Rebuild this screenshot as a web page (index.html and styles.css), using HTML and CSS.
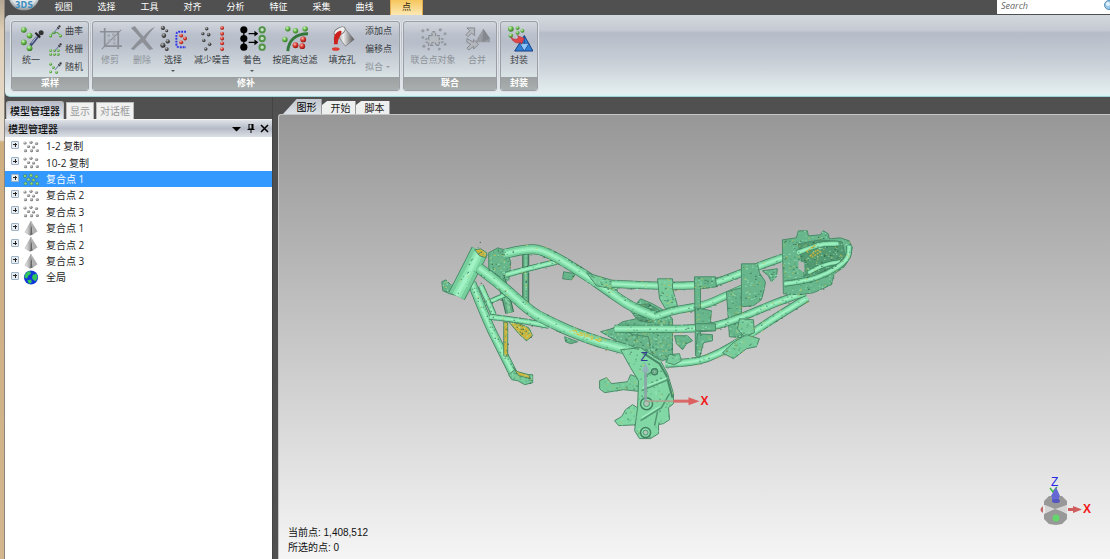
FILE: index.html
```html
<!DOCTYPE html>
<html lang="zh-CN">
<head>
<meta charset="utf-8">
<title>模型管理器</title>
<link rel="stylesheet" href="styles.css">
</head>
<body>
<svg class="defs" aria-hidden="true">
  <defs>
    <radialGradient id="gGreen" cx=".38" cy=".32" r=".7"><stop offset="0" stop-color="#d4f5c4"/><stop offset=".5" stop-color="#68b84e"/><stop offset="1" stop-color="#32781f"/></radialGradient>
    <radialGradient id="gRed" cx=".38" cy=".32" r=".7"><stop offset="0" stop-color="#f9b9b0"/><stop offset=".5" stop-color="#d8382e"/><stop offset="1" stop-color="#8e150e"/></radialGradient>
    <radialGradient id="gDark" cx=".38" cy=".32" r=".7"><stop offset="0" stop-color="#c4c4c4"/><stop offset=".5" stop-color="#555"/><stop offset="1" stop-color="#222"/></radialGradient>
    <radialGradient id="gGray" cx=".38" cy=".32" r=".7"><stop offset="0" stop-color="#e4e4e4"/><stop offset=".5" stop-color="#999"/><stop offset="1" stop-color="#666"/></radialGradient>
    <linearGradient id="gCan" x1="0" x2="1"><stop offset="0" stop-color="#777"/><stop offset=".4" stop-color="#eee"/><stop offset="1" stop-color="#555"/></linearGradient>
    <linearGradient id="gPyr" x1="0" x2="1"><stop offset="0" stop-color="#eee"/><stop offset="1" stop-color="#999"/></linearGradient>
    <symbol id="picker" viewBox="0 0 12 12"><path d="M2 11 8 4" stroke="#7182a5" stroke-width="1.4"/><path d="M7 3l2.5 2.5" stroke="#333" stroke-width="1.6"/><circle cx="10" cy="2" r="1.6" fill="#333"/></symbol>
    <symbol id="cloud" viewBox="0 0 16 12"><g fill="url(#gGray)"><circle cx="2" cy="2.500" r="1.600"/><circle cx="8" cy="1.800" r="1.600"/><circle cx="13.500" cy="3" r="1.600"/><circle cx="5.500" cy="6" r="1.600"/><circle cx="10.500" cy="6.500" r="1.600"/><circle cx="2.500" cy="10.200" r="1.600"/><circle cx="8.500" cy="10.200" r="1.600"/><circle cx="14.300" cy="10" r="1.600"/></g></symbol>
    <symbol id="pyramid" viewBox="0 0 16 16"><path d="M8 0 1.500 12 7 15.500z" fill="url(#gPyr)" stroke="#999" stroke-width=".4"/><path d="M8 0 7 15.500 10 14.500z" fill="#666"/><path d="M8 0 10 14.500 15 11z" fill="#b0b0b0"/></symbol>
  </defs>
</svg>
<div class="desktop-edge"></div>
<div class="app">
  <header class="menubar">
    <div class="logo"><svg viewBox="0 0 32 32" width="32" height="32"><defs><radialGradient id="orb" cx=".5" cy=".35" r=".65"><stop offset="0" stop-color="#fff"/><stop offset=".75" stop-color="#dde3e6"/><stop offset="1" stop-color="#858c90"/></radialGradient></defs><circle cx="16" cy="16" r="15.500" fill="url(#orb)"/><text x="16" y="29" text-anchor="middle" class="logo-text">3DS</text></svg></div>
    <nav class="menu">
      <button>视图</button><button>选择</button><button>工具</button><button>对齐</button><button>分析</button><button>特征</button><button>采集</button><button>曲线</button><button class="active">点</button>
    </nav>
    <label class="search"><input type="text" placeholder="Search" aria-label="Search"><svg viewBox="0 0 12 12" width="12" height="12"><path d="M8 8l3 3" stroke="#666" stroke-width="2"/><circle cx="6" cy="5" r="4.500" fill="#9ac8e8" stroke="#5b8fb8"/><circle cx="5" cy="4" r="2" fill="#e4f4fc"/></svg></label>
  </header>

  <section class="ribbon">
    <div class="group">
      <div class="tools">
        <button class="tool w36"><svg viewBox="0 0 26 28"><g fill="url(#gGreen)"><circle cx="5" cy="5" r="3"/><circle cx="11" cy="11" r="3"/><circle cx="5" cy="18" r="3"/><circle cx="11" cy="24" r="3"/></g><path d="M12 21 21 10" stroke="#3d4a75" stroke-width="3"/><path d="M13 19 20 10" stroke="#c4cde4" stroke-width="1"/><path d="M17 8l5 5" stroke="#222" stroke-width="2"/><circle cx="23" cy="8" r="2.600" fill="#333"/></svg><span>统一</span></button>
        <div class="stack samples">
          <button><svg viewBox="0 0 12 12"><path d="M1 10 4 7 8 7 11 10" stroke="#68aa56" fill="none"/><g fill="url(#gGreen)"><circle cx="1.500" cy="10" r="1.500"/><circle cx="4.500" cy="7" r="1.500"/><circle cx="10.500" cy="10" r="1.500"/></g><use href="#picker" x="3" y="0" width="8" height="8"/></svg>曲率</button>
          <button><svg viewBox="0 0 12 12"><g fill="url(#gGreen)"><circle cx="1.500" cy="7" r="1.300"/><circle cx="5" cy="7" r="1.300"/><circle cx="8.500" cy="7" r="1.300"/><circle cx="1.500" cy="10.500" r="1.300"/><circle cx="5" cy="10.500" r="1.300"/><circle cx="8.500" cy="10.500" r="1.300"/></g><use href="#picker" x="4" y="0" width="8" height="8"/></svg>格栅</button>
          <button><svg viewBox="0 0 12 12"><g fill="url(#gGreen)"><circle cx="1.500" cy="3" r="1.300"/><circle cx="4" cy="6" r="1.300"/><circle cx="1.500" cy="10" r="1.300"/><circle cx="7" cy="10.500" r="1.300"/></g><use href="#picker" x="4" y="1" width="8" height="8"/></svg>随机</button>
        </div>
      </div>
      <h2>采样</h2>
    </div>

    <div class="group">
      <div class="tools">
        <button class="tool w32" disabled><svg viewBox="0 0 26 28"><g fill="none" stroke="#8b8f96" stroke-width="1.800"><path d="M7 3v19h18M2 7h19v18"/><path d="M4 25 24 5" stroke-width="1.200"/></g><g fill="#a4a8ae"><circle cx="11" cy="11" r="1.500"/><circle cx="16" cy="10" r="1.500"/><circle cx="12" cy="16" r="1.500"/><circle cx="17" cy="15" r="1.500"/><circle cx="17" cy="19" r="1.500"/></g></svg><span>修剪</span></button>
        <button class="tool w32" disabled><svg viewBox="0 0 26 28"><path d="M1 3 5 1C9 6 12 10 14 12 18 7 22 3 26 2 21 7 18 11 16 15L24 25 20 26 13 18C9 21 7 23 4 26L1 25C4 21 8 17 11 14 7 9 4 6 1 3z" fill="#8d9197"/></svg><span>删除</span></button>
        <button class="tool w30"><svg viewBox="0 0 28 28"><g fill="url(#gDark)"><circle cx="3" cy="3" r="2.200"/><circle cx="7" cy="6" r="1.600"/><circle cx="4" cy="11" r="2.400"/><circle cx="8" cy="17" r="2.200"/><circle cx="3" cy="21" r="2.600"/><circle cx="7" cy="25" r="2"/></g><path d="M27 7h-7q-3 0-3 3v10q0 3 3 3h7" fill="none" stroke="#3034e8" stroke-width="2" stroke-dasharray="2 1"/><g fill="url(#gRed)"><circle cx="22" cy="11" r="2"/><circle cx="26" cy="14" r="2"/><circle cx="22" cy="18" r="2"/></g></svg><span>选择</span><i class="caret"></i></button>
        <button class="tool w48"><svg viewBox="0 0 26 28"><g fill="url(#gDark)"><circle cx="7" cy="4" r="1.800"/><circle cx="3" cy="9" r="1.700"/><circle cx="9" cy="10" r="1.900"/><circle cx="4" cy="16" r="1.700"/><circle cx="10" cy="20" r="1.800"/><circle cx="6" cy="25" r="1.800"/></g><g fill="url(#gRed)"><circle cx="23" cy="3" r="2"/><circle cx="23" cy="9" r="2"/><circle cx="23" cy="14" r="2"/><circle cx="23" cy="19" r="2"/><circle cx="23" cy="25" r="2"/></g></svg><span>减少噪音</span></button>
        <button class="tool w32"><svg viewBox="0 0 28 28"><circle cx="5" cy="5" r="3.700"/><circle cx="5" cy="14" r="3.700"/><circle cx="5" cy="23" r="3.700"/><path d="M5 5v18M10 9h8M10 18h8" stroke="#000" stroke-width="1.400"/><path d="M16 6l4 3-4 3zM16 15l4 3-4 3z"/><g fill="#c4dec0" stroke="#4f9147" stroke-width="2"><circle cx="24" cy="5" r="2.800"/><circle cx="24" cy="14" r="2.800"/><circle cx="24" cy="23" r="2.800"/></g></svg><span>着色</span><i class="caret"></i></button>
        <button class="tool w54"><svg viewBox="0 0 28 28"><path d="M6 27C7 16 14 9 27 9" fill="none" stroke="#34773a" stroke-width="3"/><g fill="url(#gGreen)"><circle cx="6" cy="4" r="2.800"/><circle cx="14" cy="6" r="2.800"/><circle cx="24" cy="4" r="2.800"/><circle cx="3" cy="15" r="2.800"/></g><g fill="url(#gRed)"><circle cx="22" cy="15" r="3"/><circle cx="14" cy="21" r="3"/><circle cx="21" cy="22" r="3"/></g></svg><span>按距离过滤</span></button>
        <button class="tool w40"><svg viewBox="0 0 26 28"><path d="M6 8 15 3 25 15 16 22z" fill="url(#gCan)" stroke="#666" stroke-width=".6"/><ellipse cx="10" cy="6.500" rx="6.500" ry="3.500" transform="rotate(-32 10 6.500)" fill="#eee" stroke="#777"/><path d="M5 10C8 6 12 5 12 7 12 11 8 13 8 20H4C5 17 3 15 5 10z" fill="#cc211c"/><ellipse cx="6" cy="25" rx="4" ry="1.800" fill="#df3a30"/></svg><span>填充孔</span></button>
        <div class="stack">
          <button>添加点</button><button>偏移点</button><button disabled>拟合<i class="caret"></i></button>
        </div>
      </div>
      <h2>修补</h2>
    </div>

    <div class="group">
      <div class="tools union">
        <button class="tool w54" disabled><svg viewBox="0 0 28 28"><path d="M9 11h4q-2-4 1-4t2 4h4v4q4-2 4 1t-4 2v3h-4q1-3-2-3t-1 3H9v-3q-3 1-3-2t3-1z" fill="#b7bbc2" stroke="#8a8e95" stroke-width="1.300" stroke-dasharray="3 1"/><g fill="#989ca2"><circle cx="3" cy="6" r="1.700"/><circle cx="8" cy="5" r="1.500"/><circle cx="21" cy="5" r="1.700"/><circle cx="26" cy="9" r="1.600"/><circle cx="3" cy="13" r="1.500"/><circle cx="26" cy="20" r="1.600"/><circle cx="4" cy="22" r="1.700"/><circle cx="9" cy="25" r="1.500"/><circle cx="20" cy="25" r="1.500"/></g></svg><span>联合点对象</span></button>
        <button class="tool w34" disabled><svg viewBox="0 0 28 28"><path d="M12 17 20 4 27 14 27 18H12z" fill="#979ba1"/><path d="M20 4 19 18 27 14z" fill="#85898f"/><path d="M3 3h8v8L8 8.500 4 12 2 10 6 6zM3 14l7 4v-3l5 5-5 5v-3l-5 4-2-2 4-4-4-2z" fill="#b4b8be" stroke="#85898f"/></svg><span>合并</span></button>
      </div>
      <h2>联合</h2>
    </div>

    <div class="group">
      <div class="tools">
        <button class="tool w34"><svg viewBox="0 0 28 28"><g fill="url(#gGreen)"><circle cx="5" cy="4" r="3"/><circle cx="12" cy="3" r="2"/><circle cx="5" cy="11" r="2.300"/><circle cx="12" cy="8" r="2"/><circle cx="17" cy="6" r="2"/></g><path d="M19 11 9 27h19z" fill="#2f7fd6" stroke="#173f83"/><path d="M14 19h10L19 27zM19 11v8" fill="#8dc5f7" stroke="#173f83" stroke-width=".7"/><path d="M5 12c2 3 6 4 8 1l-1-2 7 3-3 6-1-2C11 20 6 17 5 12z" fill="#e24448" stroke="#a2242b" stroke-width=".5"/></svg><span>封装</span></button>
      </div>
      <h2>封装</h2>
    </div>
  </section>

  <main class="workspace">
    <aside class="manager">
      <div class="side-tabs"><button class="active">模型管理器</button><button>显示</button><button>对话框</button></div>
      <div class="panel-title"><h1>模型管理器</h1>
        <button aria-label="菜单"><svg viewBox="0 0 9 9"><path d="M0 3h9L4.500 7.500z"/></svg></button>
        <button aria-label="固定"><svg viewBox="0 0 9 9"><path d="M3 0h4v5H3zM1.500 5.500h7M5 5v4" fill="none" stroke="#000"/><path d="M5.500 0H7v5H5.500z"/></svg></button>
        <button aria-label="关闭"><svg viewBox="0 0 9 9"><path d="M1 1l7 7M8 1 1 8" stroke="#000" stroke-width="1.500"/></svg></button>
      </div>
      <ul class="tree">
        <li><button aria-label="展开"></button><svg><use href="#cloud"/></svg>1-2 复制</li>
        <li><button aria-label="展开"></button><svg><use href="#cloud"/></svg>10-2 复制</li>
        <li class="selected"><button aria-label="展开"></button><svg viewBox="0 0 16 12"><g fill="#8fd878" stroke="#2f6e5c" stroke-width=".5"><circle cx="2" cy="2.500" r="1.600"/><circle cx="8" cy="1.900" r="1.600"/><circle cx="13.500" cy="3" r="1.600"/><circle cx="5.500" cy="6" r="1.600"/><circle cx="10.500" cy="6.500" r="1.600"/><circle cx="2.500" cy="10" r="1.600"/><circle cx="8.500" cy="10" r="1.600"/><circle cx="14.200" cy="10" r="1.600"/></g></svg>复合点 1</li>
        <li><button aria-label="展开"></button><svg><use href="#cloud"/></svg>复合点 2</li>
        <li><button aria-label="展开"></button><svg><use href="#cloud"/></svg>复合点 3</li>
        <li><button aria-label="展开"></button><svg><use href="#pyramid"/></svg>复合点 1</li>
        <li><button aria-label="展开"></button><svg><use href="#pyramid"/></svg>复合点 2</li>
        <li><button aria-label="展开"></button><svg><use href="#pyramid"/></svg>复合点 3</li>
        <li><button aria-label="展开"></button><svg viewBox="0 0 16 16"><circle cx="8" cy="8" r="7.500" fill="#1238d8"/><path d="M2 4q2-3 5-3l1 3-3 2-1 3-3-1zM10 5l4-1 1 4-2 4-3-2-1-2zM4 11l4-1 1 3-3 2z" fill="#2fc65a"/></svg>全局</li>
      </ul>
    </aside>
    <section class="view">
      <div class="view-tabs"><button class="active">图形</button><button>开始</button><button>脚本</button></div>
      <div class="canvas">
        <svg class="scene" viewBox="278 114 832 445" preserveAspectRatio="xMinYMin meet" role="img" aria-label="车架点云">
          <g id="model"></g>
          <g class="axes">
            <path d="M645 401V366" stroke="#8ba3a8" stroke-width="3" opacity=".85"/>
            <path d="M645 362l4 9h-8z" fill="#93b4bb"/>
            <path d="M645 400.500h29" stroke="#b5a090" stroke-width="1.500"/>
            <path d="M673 400.500h18" stroke="#d96a6a" stroke-width="3"/>
            <path d="M688 396.500l11 4-11 4z" fill="#dc6060"/>
            <text x="640" y="360" class="axis-z model-z">Z</text>
            <text x="700" y="404" class="axis-x">X</text>
          </g>
        </svg>
        <svg class="triad" viewBox="1035 472 60 60" width="60" height="60">
          <path d="M1044 501l5-5h13l5 5v4l-9 4 9 5v5l-5 5-6 1-7-1-5-5v-5l10-5-10-4z" fill="#989898"/>
          <path d="M1055 509l12-4v8zM1055 509l-10-4v8z" fill="#d6d6d6"/>
          <path d="M1043 506v7q-5-3 0-7z" fill="#c46464"/>
          <path d="M1068 508h5v-2l9 3.500-9 3.500v-2h-5z" fill="#cf5d5d"/>
          <path d="M1050 488l3 4 4-5" fill="none" stroke="#3dbb44" stroke-width="1.500"/>
          <path d="M1056 487l4 9-1 1v5h-7v-5l-1-1z" fill="#6668d4"/><ellipse cx="1056" cy="501" rx="4" ry="2" fill="#5657bd"/>
          <circle cx="1056" cy="518" r="3.500" fill="#63d66b"/>
          <text x="1051" y="486" class="axis-z">Z</text><text x="1083" y="513" class="axis-x">X</text>
        </svg>
        <div class="status"><p>当前点: 1,408,512</p><p>所选的点: 0</p></div>
      </div>
    </section>
  </main>
</div>
<script src="scene.js"></script>
</body>
</html>
```
FILE: styles.css
```css
* { box-sizing: border-box; }
body { margin: 0; height: 100vh; display: flex; overflow: hidden; background: #505050; color: #222; font: 10px/14px "Open Sans", "Noto Sans CJK SC", sans-serif; }
button { font: inherit; color: inherit; border: 0; padding: 0; margin: 0; background: none; white-space: nowrap; }
h1, h2, p, ul { margin: 0; padding: 0; font: inherit; }
.defs { position: absolute; width: 0; height: 0; }
.desktop-edge { flex: none; width: 5px; border-right: 1px solid #8b8580; background: linear-gradient(#b3a591 0, #ddcdb4 30px, #e8dfd2 140px, #cfae80 142px, #d3b68e 100%); }
.app { flex: 1; min-width: 0; display: flex; flex-direction: column; }

.menubar { flex: none; height: 15px; display: flex; align-items: stretch; color: #fff; font-size: 9px; }
.logo { width: 37px; padding-left: 3px; display: flex; align-items: flex-end; overflow: hidden; }
.logo svg { flex: none; margin-bottom: 4px; }
.logo-text { font: bold 8px "DejaVu Sans", sans-serif; fill: #3e8fc0; }
.menu { display: flex; }
.menu button { width: 43px; line-height: 13px; padding-bottom: 2px; }
.menu .active { width: 33px; margin-left: 4px; color: #332a10; background: linear-gradient(#f5c65c, #fde9b5); border: solid #e0a94c; border-width: 0 1px; }
.search { margin-left: auto; width: 113px; height: 14px; display: flex; align-items: center; background: #fff; padding-left: 4px; overflow: hidden; }
.search input { flex: 1; min-width: 0; border: 0; padding: 0; margin: 0 0 3px; font: italic 9px/12px "Open Sans", sans-serif; background: none; outline: 0; }
.search input::placeholder { color: #666; }
.search svg { flex: none; margin: 0 -5px 2px 0; }

.ribbon { flex: none; height: 82px; display: flex; align-items: flex-start; gap: 3px; padding: 6px; font-size: 9px; border-bottom: 1px solid #9fd0d4; border-radius: 5px 0 0 5px; background: linear-gradient(#d3d7de 0, #c5cad3 15px, #b6bcc8 18px, #c6cdd5 45px, #e4eeef 78px, #d6f3f4 100%); }
.group { display: flex; flex-direction: column; height: 70px; border: 1px solid #9a9fa6; border-radius: 3px; overflow: hidden; background: linear-gradient(#d2d6dd 0, #bcc2cd 12px, #b7bdc9 20px, #dbe4e6 56px); box-shadow: 0 0 0 1px #dfe3e8; }
.group h2 { flex: none; height: 13px; line-height: 12px; text-align: center; color: #fff; font-weight: bold; background: linear-gradient(#9ca0a0, #a9aeae); }
.tools { flex: 1; min-height: 0; display: flex; padding: 0 1px; color: #3a3d42; }
.tools.union { padding: 0 2px; }
.tool { display: flex; flex-direction: column; align-items: center; padding-top: 3px; line-height: 13px; }
.tool svg { width: 27px; height: 27px; margin-bottom: 1px; }
.tool:disabled, .stack button:disabled { color: #8d9299; }
.w30 { width: 30px; } .w32 { width: 32px; } .w34 { width: 34px; } .w36 { width: 36px; } .w40 { width: 40px; } .w48 { width: 48px; } .w54 { width: 54px; }
.stack { display: flex; flex-direction: column; padding: 0 6px 0 3px; }
.stack.samples { padding: 0 4px 0 0; }
.stack button { height: 18px; display: flex; align-items: center; gap: 3px; }
.stack svg { width: 13px; height: 13px; }
.caret { margin-top: 4px; border: solid transparent; border-width: 2px 2px 0; border-top-color: #555; }
.stack .caret { margin: 0; border-top-color: #999; }

.workspace { flex: 1; min-height: 0; display: flex; gap: 5px; }
.manager { width: 268px; display: flex; flex-direction: column; padding-top: 4px; border-right: 1px solid #444; }
.side-tabs { display: flex; align-items: flex-end; gap: 2px; padding-left: 1px; height: 18px; }
.side-tabs button { height: 17px; padding: 0 3px; line-height: 16px; color: #999; background: #f1f1f1; border: 1px solid #bbb; border-bottom: 0; }
.side-tabs .active { height: 18px; color: #111; background: linear-gradient(#b7bcc8, #e5e9ef); border-radius: 3px 3px 0 0; }
.panel-title { display: flex; align-items: center; height: 18px; gap: 5px; padding: 0 3px; color: #111; border-top: 1px solid #f2f2f2; background: linear-gradient(#dfe3e9, #b5bbc7 50%, #dce0e6); }
.side-tabs .active, .panel-title h1 { font-weight: 500; }
.panel-title h1 { flex: 1; }
.panel-title button { width: 9px; height: 9px; display: flex; }
.panel-title svg { width: 9px; height: 9px; }
.tree { flex: 1; list-style: none; display: grid; grid-template-rows: repeat(9, minmax(16px, 3.9%)); padding-top: 1px; background: #fff; }
.tree li { display: flex; align-items: center; padding-left: 6px; }
.tree button { width: 8px; height: 8px; margin: 0 4px 3px 0; border: 1px solid #9db2c4; border-radius: 1px; background: linear-gradient(#222, #222) center / 4px 1px no-repeat, linear-gradient(#222, #222) center / 1px 4px no-repeat, #e6ecf0; }
.tree svg { width: 16px; height: 15px; margin-right: 7px; }
.tree .selected { color: #fff; background: #3399ff; }

.view { flex: 1; min-width: 0; display: flex; flex-direction: column; }
.view-tabs { display: flex; align-items: flex-end; height: 17px; padding: 0 5px; }
.view-tabs button { height: 13px; width: 34px; line-height: 12px; padding-left: 4px; background: #eeefef; clip-path: polygon(0 30%, 15% 0, 100% 0, 100% 100%, 0 100%); border-right: 1px solid #999; }
.view-tabs .active { height: 15px; width: 39px; line-height: 14px; padding-left: 9px; color: #000; background: linear-gradient(#c2c7cf, #dce1e7); clip-path: polygon(0 100%, 35% 0, 100% 0, 100% 100%); }
.canvas { flex: 1; min-height: 0; position: relative; overflow: hidden; border: solid #c4c4c4; border-width: 1px 0 0 1px; border-radius: 3px 0 0; background: linear-gradient(#979797, #f5f5f5); }
.scene { display: block; width: 100%; }
.triad { position: absolute; right: 15px; bottom: 27px; }
.status { position: absolute; left: 9px; bottom: 4px; line-height: 15px; font-family: "Liberation Sans", "Noto Sans CJK SC", sans-serif; color: #111; }
.axis-z { font: 12px "Liberation Sans", sans-serif; fill: #2626e6; }
.model-z { fill: #303c94; }
.axis-x { font: bold 12px "Liberation Sans", sans-serif; fill: #f01818; }
.tube { fill: none; stroke-linejoin: round; }
```
FILE: scene.js
```js
const NS = "http://www.w3.org/2000/svg";
const model = document.getElementById("model");

let seed = 7;
const rand = () => (seed = (seed * 16807) % 2147483647) / 2147483647;

function add(tag, attrs) {
  const el = document.createElementNS(NS, tag);
  for (const k in attrs) el.setAttribute(k, attrs[k]);
  model.appendChild(el);
  return el;
}

const SPECKS = ["#24523a", "#3f7f5c", "#9deabf", "#a6f5c8", "#cfc04c", "#4f9a70", "#54a577", "#8adbad"];
function speck(x, y) {
  add("rect", { x: Math.round(x), y: Math.round(y), width: 1, height: 1, fill: SPECKS[Math.floor(rand() * SPECKS.length)] });
}

/* Smooth path through the centre line of a tube. */
function smooth(p) {
  let d = `M${p[0]}`;
  for (let i = 1; i < p.length - 1; i++) {
    d += ` Q${p[i]} ${(p[i][0] + p[i + 1][0]) / 2},${(p[i][1] + p[i + 1][1]) / 2}`;
  }
  return d + ` L${p[p.length - 1]}`;
}

function tube(w, pts, dark) {
  const d = smooth(pts);
  const layers = dark
    ? [["#396e52", w], ["#5fa981", w - 2], ["#79c89b", w / 3]]
    : [["#3f8260", w], ["#76ce9c", w - 1.5], ["#8de6b2", w / 2], ["#a2f2c5", w / 5]];
  let path;
  for (const [stroke, width] of layers) path = add("path", { class: "tube", d, stroke, "stroke-width": width });
  const len = path.getTotalLength();
  for (let i = 0; i < len * 0.5; i++) {
    const p = path.getPointAtLength(rand() * len);
    const edge = (rand() < 0.7 ? Math.sign(rand() - 0.5) : rand() - 0.5) * w / 2;
    speck(p.x, p.y + edge);
  }
}

function plate(fill, pts, density = 0.1) {
  const el = add("polygon", { points: pts, fill, stroke: "#4a8b68", "stroke-width": 1, "stroke-linejoin": "round" });
  const b = el.getBBox();
  for (let i = 0; i < b.width * b.height * density * 0.5; i++) {
    const p = model.ownerSVGElement.createSVGPoint();
    p.x = b.x + rand() * b.width;
    p.y = b.y + rand() * b.height;
    if (el.isPointInFill(p)) speck(p.x, p.y);
  }
}

const A = "#68b78c", B = "#78cc9b", C = "#82d8a5", GOLD = "#cdb63e";

/* Steering head: rear parts */
tube(9, [[494, 256], [500, 275], [509, 312]], true);
plate(A, "488,252 497,247 507,250 510,262 508,280 499,276 488,268", 0.3);
tube(7, [[525, 252], [525, 302]], true);
tube(6, [[505, 274], [530, 267], [556, 261]]);
tube(5, [[484, 303], [498, 297], [508, 292]]);
tube(6, [[480, 285], [487, 300], [493, 314]]);
plate(A, "563,271 575,273 571,279 562,278", 0.2);
plate(A, "564,336 577,341 570,343 565,341", 0.2);

/* Mid-frame casting */
plate(A, "640,298 652,303 664,310 672,318 672,356 662,360 648,352 636,344 612,338 604,333 622,321 636,318 630,310", 0.3);
plate("#559b76", "628,305 648,303 661,311 650,322 638,320", 0.35);
plate(A, "600,331 618,326 632,334 648,336 650,350 625,345", 0.3);

/* Rails */
tube(10, [[504, 253], [528, 247], [547, 251], [586, 275], [609, 291], [630, 306], [656, 316]]);
plate(B, "586,272 610,279 619,282 616,289 596,285", 0.3);
tube(8, [[611, 283], [650, 285], [693, 285], [716, 282], [744, 271], [783, 256], [820, 246]]);
tube(8, [[655, 316], [670, 310], [703, 305], [723, 296], [748, 285]]);
tube(8, [[665, 363], [694, 362], [719, 353], [743, 338], [773, 318], [807, 297]]);
plate(B, "657,278 672,278 672,288 677,305 665,308 659,298", 0.2);
plate(A, "694,276 715,276 716,286 700,288 700,354 695,354", 0.2);
plate(A, "726,291 741,287 741,337 729,336", 0.25);
plate(A, "695,307 711,310 710,320 715,330 695,331", 0.15);
tube(8, [[614, 328], [650, 328], [693, 328], [718, 325], [750, 313], [775, 302], [804, 292]]);
plate(A, "695,323 715,323 715,330 695,330", 0.1);
plate(A, "741,263 757,263 759,272 765,281 764,288 761,299 753,305 741,306", 0.13);
plate(B, "739,318 753,319 754,332 744,336 737,328", 0.15);
plate(B, "722,352 734,341 746,334 759,338 756,346 746,348 733,358", 0.15);
plate(A, "674,335 687,335 692,340 686,343 682,349 676,343", 0.2);
plate(A, "697,333 712,334 712,340 703,342 699,357 695,355", 0.2);
plate(B, "668,354 679,353 681,360 674,364 666,362", 0.2);
plate(A, "762,270 777,268 776,276 771,281 768,275", 0.4);

/* Tail */
plate(A, "796,237 798,230 807,230 808,235 820,234 823,230 828,233 829,238 840,237 849,240 852,247 850,256 844,266 834,273 831,284 813,292 799,294 783,293 782,239", 0.18);
plate("#529a72", "798,243 820,239 842,241 845,256 828,270 804,275", 0.25);
tube(6, [[797, 252], [812, 246], [823, 243], [838, 243]]);
tube(5, [[808, 272], [822, 264], [840, 261]]);
tube(6, [[784, 283], [806, 280], [827, 273], [848, 259], [849, 245]]);
add("path", { d: "M798 260l6 2v10l-6-4z", fill: "#b4b8b4" });
add("path", { d: "M806 251l5-4 5-3M810 255l7-6 3 2-8 5z", stroke: "#c3b13e", "stroke-width": 1.5, "stroke-dasharray": "2 1", fill: "none" });

/* Head, down tubes */
plate(A, "441,281 445,279 450,284 459,287 457,295 449,293 442,290", 0.4);
tube(9, [[471, 282], [486, 320], [501, 350], [513, 374]]);
tube(6, [[489, 316], [515, 319], [548, 325]]);
tube(18, [[479, 250], [468, 272], [456, 295]]);
plate(GOLD, "474,249 480,248 486,252 485,257 479,255", 0.2);
tube(11, [[478, 267], [497, 281], [530, 311], [545, 319], [570, 331], [603, 343], [632, 350], [654, 365]]);
plate(GOLD, "503,321 507,322 507,356 503,355", 0.3);
plate(GOLD, "508,321 519,323 528,327 532,335 526,340 519,334", 0.4);
plate(B, "508,374 514,369 521,374 532,374 532,382 524,384 517,380 511,379", 0.3);
plate(GOLD, "512,366 517,371 528,374 530,378 518,375", 0.3);
for (let i = 0; i < 55; i++) {
  const x = 568 + rand() * 36;
  add("rect", { x, y: 327 + (x - 568) * 0.33 + rand() * 4, width: 1.5, height: 1, fill: "#d3c249" });
}

/* Swing-arm plate */
plate(B, "599,380 606,377 611,383 627,381 630,374 641,378 641,391 623,389 604,392 599,388", 0.2);
plate(C, "614,420 621,416 625,409 632,404 640,409 640,424 618,425", 0.15);
plate(C, "620,349 640,347 660,360 667,373 673,393 673,403 668,407 669,419 663,423 658,424 658,433 650,438 639,438 634,430 637,407 638,380 630,367", 0.06);
add("path", { d: "M642 352l17 11 7 12 6 22", fill: "none", stroke: "#478866", "stroke-width": 2 });
add("path", { d: "M641 390l27-11M640 420l21-13 8-14M657 411l-3 14M644 376l12-8", fill: "none", stroke: "#519572", "stroke-width": 1.5 });
add("path", { d: "M642 387l25-10M641 417l18-11", fill: "none", stroke: "#adf8cd" });
for (const [x, y, r] of [[646, 403, 6], [645, 432, 5], [654, 371, 3]]) {
  add("circle", { cx: x, cy: y, r, fill: "#8ae2ad", stroke: "#428061", "stroke-width": 1.5 });
  add("circle", { cx: x, cy: y, r: r / 2, fill: "#adc4b6", stroke: "#519572" });
}
```
